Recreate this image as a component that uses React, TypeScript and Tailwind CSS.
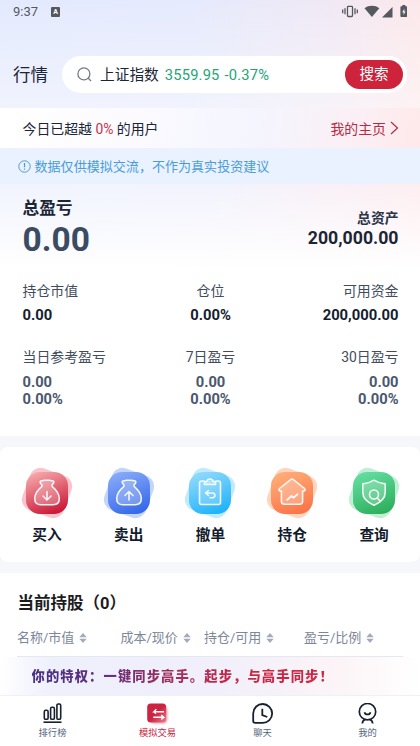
import type { ReactNode } from "react";

type ActionItem = {
  id: string;
  label: string;
  from: string;
  to: string;
  halo: string;
  icon: ReactNode;
};

const bag = (
  <path
    d="M19.300 16.200c-1.700-1.500-1.600-3.700.8-3.400 1 .1 1.300-.6 2.400-.6h5c1.100 0 1.400.7 2.400.6 2.400-.3 2.500 1.900.8 3.400-1 .9-1.100 1.700-.1 2.700 3.300 2.800 6.700 6.300 6.700 11.700 0 4.200-2.300 6.200-6 6.200H18.700c-3.700 0-6-2-6-6.200 0-5.400 3.400-8.900 6.700-11.700 1-1 .9-1.800-.1-2.700Z"
    fill="#fff"
    fillOpacity="0.25"
  />
);

const actions: ActionItem[] = [
  {
    id: "buy",
    label: "买入",
    from: "#f5a5a8",
    to: "#ca1735",
    halo: "#f58a9a",
    icon: (
      <>
        {bag}
        <path d="M25 23.500v8M21 28l4 4 4-4" />
      </>
    ),
  },
  {
    id: "sell",
    label: "卖出",
    from: "#87a9f8",
    to: "#3468ea",
    halo: "#86adfb",
    icon: (
      <>
        {bag}
        <path d="M25 32v-8M21 27.500l4-4 4 4" />
      </>
    ),
  },
  {
    id: "cancel",
    label: "撤单",
    from: "#8fd9fb",
    to: "#1eb2fb",
    halo: "#82d6fb",
    icon: (
      <>
        <path
          d="M19 13h-2.500a2 2 0 0 0-2 2v19.500a2 2 0 0 0 2 2h17a2 2 0 0 0 2-2V15a2 2 0 0 0-2-2H31"
          fill="#fff"
          fillOpacity="0.22"
        />
        <path d="M19.500 16.500v-3h2.200c.5-1.600 1.700-2.500 3.300-2.500s2.800.9 3.300 2.500h2.200v3Z" fill="#fff" fillOpacity="0.3" />
        <path d="M23.500 22.500 20.500 25l3 2.500M21 25h6.500a2.300 2.300 0 0 1 0 4.700H25" />
      </>
    ),
  },
  {
    id: "position",
    label: "持仓",
    from: "#ffad78",
    to: "#fa7448",
    halo: "#ffab80",
    icon: (
      <>
        <path
          d="M23.300 11.800 12.500 20.500c-1.200 1-.6 2.500.9 2.500h1v10.200c0 1.900 1.200 3 3 3h15.200c1.800 0 3-1.100 3-3V23h1c1.500 0 2.100-1.500.9-2.500L26.700 11.800c-1-.9-2.400-.9-3.400 0Z"
          fill="#fff"
          fillOpacity="0.25"
        />
        <path d="m20 32 4.500-4 2 1.700 4-3.500" strokeWidth="1.800" />
      </>
    ),
  },
  {
    id: "query",
    label: "查询",
    from: "#63dda0",
    to: "#2caf5b",
    halo: "#7fe0ab",
    icon: (
      <>
        <path
          d="M25 12.200c3.500 2.300 7.300 3.300 11.200 3.700v8.600c0 6.200-5.300 10.200-11.200 12.700-5.900-2.500-11.200-6.500-11.200-12.700v-8.600c3.900-.4 7.700-1.400 11.200-3.700Z"
          fill="#fff"
          fillOpacity="0.22"
        />
        <circle cx="25" cy="26.500" r="4.500" />
        <path d="m28.300 30 3 3.300" />
      </>
    ),
  },
];

const columns = [
  { label: "名称/市值", width: "w-[103.500px]" },
  { label: "成本/现价", width: "w-[83.500px]" },
  { label: "持仓/可用", width: "w-[100px]" },
  { label: "盈亏/比例", width: "w-[80px]" },
];

function StatusBar() {
  return (
    <div className="flex h-6 items-center justify-between px-[13px] text-[#55585f]">
      <div className="flex items-center gap-[13px]">
        <span className="text-[13px] leading-6">9:37</span>
        <span className="flex h-[10px] w-[9px] items-center justify-center rounded-[1px] bg-[#55585f] text-[7px] font-bold leading-none text-white">
          A
        </span>
      </div>
      <svg width="66" height="14" viewBox="0 0 66 14" fill="currentColor">
        <g fill="none" stroke="currentColor" strokeWidth="1.300">
          <rect x="6.500" y="1.300" width="5" height="10.200" rx="0.800" />
          <path d="M4 3.300v6M1.700 4.500v3.700M14 3.300v6M16.300 4.500v3.700" />
        </g>
        <path d="M23.500 3.300C27.300 0 34.500 0 38.300 3.300L30.900 12Z" />
        <path d="M51.500 2V12.500H41Z" />
        <path
          fillRule="evenodd"
          d="M60.300 1.200h1V0h3v1.200h1q.9 0 .9.900v9q0 .9-.9.900h-5q-.9 0-.9-.9v-9q0-.9.900-.9Zm3.100 2.600-2.300 3.400h1.400v2.700l2.200-3.500h-1.300Z"
        />
      </svg>
    </div>
  );
}

function Sorter() {
  return (
    <svg className="ml-[5px]" width="8" height="10" viewBox="0 0 8 10" fill="#a3abb8">
      <path d="M4 0 7.700 4.300H.3ZM.3 5.700h7.400L4 10Z" />
    </svg>
  );
}

function Actions() {
  return (
    <section className="flex h-[115px] rounded-[8px] bg-white pl-[6px] pt-[19px]">
      {actions.map(({ id, label, from, to, halo, icon }) => (
        <div key={id} className="flex w-[81.800px] flex-col items-center">
          <svg width="54" height="54" viewBox="-2 -2 54 54">
            <defs>
              <linearGradient id={id} x1="0.3" y1="0" x2="0.7" y2="1">
                <stop stopColor={from} />
                <stop offset="1" stopColor={to} />
              </linearGradient>
            </defs>
            <rect x="3" y="3" width="44" height="44" rx="11" fill={halo} opacity="0.5" transform="rotate(20 25 25)" />
            <rect x="4" y="4" width="42" height="42" rx="14" fill={`url(#${id})`} />
            <g fill="none" stroke="#fff" strokeOpacity="0.9" strokeWidth="1.600" strokeLinecap="round" strokeLinejoin="round">
              {icon}
            </g>
          </svg>
          <span className="mt-[4px] text-[14.700px] font-bold leading-[22px] text-[#131c2e]">{label}</span>
        </div>
      ))}
    </section>
  );
}

function TabBar() {
  return (
    <nav className="flex h-[51px] border-t border-[#f0f1f4] bg-white text-[9.300px] leading-[14px] text-[#56657d]">
      <div className="flex w-[105px] flex-col items-center pt-[7px]">
        <svg width="22" height="22" viewBox="0 0 22 22" fill="none" stroke="#17202f" strokeWidth="1.600">
          <rect x="2.300" y="7.300" width="3.800" height="9" rx="1.400" />
          <rect x="8.600" y="4.300" width="3.800" height="12" rx="1.400" />
          <rect x="14.900" y="1" width="3.800" height="15.300" rx="1.400" />
          <path d="M1.500 19.200h18" />
        </svg>
        <span className="mt-px">排行榜</span>
      </div>
      <div className="flex w-[105px] flex-col items-center pt-[7px] text-[#c9213b]">
        <svg width="22" height="22" viewBox="0 0 22 22">
          <defs>
            <filter id="soft">
              <feGaussianBlur stdDeviation="0.800" />
            </filter>
            <linearGradient id="trade" x1="0.500" y1="0.500" x2="1" y2="1">
              <stop stopColor="#cc2440" />
              <stop offset="1" stopColor="#e5808f" />
            </linearGradient>
          </defs>
          <rect x="3" y="3" width="17.500" height="17.500" rx="4.500" fill="#f0a3ae" filter="url(#soft)" />
          <rect x="0.200" y="0.500" width="19" height="19" rx="3.500" fill="url(#trade)" />
          <path d="M17 8.700H6.800l2.500-2.500M6.800 8.700l2.200 2M6.200 14.300h10.500l-2.500-2.400M16.700 14.300l-2.400 2.300" fill="none" stroke="#fff" strokeWidth="1.400" />
        </svg>
        <span className="mt-px">模拟交易</span>
      </div>
      <div className="flex w-[105px] flex-col items-center pt-[7px]">
        <svg width="22" height="22" viewBox="0 0 22 22" fill="none" stroke="#17202f" strokeWidth="1.800">
          <path d="M10.700 1a9.400 9.400 0 1 1 0 18.900H3.200q-2 0-2-2v-7.500A9.500 9.500 0 0 1 10.700 1Z" />
          <path d="M10.300 5.700v6.400l5 1.900" />
        </svg>
        <span className="mt-px">聊天</span>
      </div>
      <div className="flex w-[105px] flex-col items-center pt-[7px]">
        <svg width="22" height="22" viewBox="0 0 22 22" fill="none" stroke="#17202f" strokeWidth="1.700">
          <circle cx="10.500" cy="8.700" r="8.200" />
          <path d="M7.500 9.200c.7 3 5.300 3 6 0M5.300 20.500q.4-3.600 3.300-4.200M15.700 20.500q-.4-3.600-3.300-4.200" />
        </svg>
        <span className="mt-px">我的</span>
      </div>
    </nav>
  );
}

export default function App() {
  return (
    <main className="flex h-[746px] w-[420px] flex-col overflow-hidden bg-[#f6f7fa] font-['Roboto','Noto_Sans_CJK_SC',sans-serif] text-[#1b2536]">
      <header className="h-[108px] bg-[linear-gradient(90deg,#e4eafe_0%,#e5eafd_45%,#f0e9f5_78%,#fce8ea_100%)]">
        <div className="h-full bg-linear-to-b from-white/0 to-white/45">
          <StatusBar />
          <div className="flex items-center pl-[13px] pt-8">
            <h1 className="w-[49px] pt-px text-[17.500px] leading-[36px]">行情</h1>
            <div className="flex h-[37px] w-[345px] items-center rounded-full bg-white pl-[15px] pr-[4px]">
              <svg width="15" height="15" viewBox="0 0 15 15" fill="none" stroke="#747b86" strokeWidth="1.300">
                <circle cx="6.900" cy="6.900" r="6" />
                <path d="m11 11 3 3" />
              </svg>
              <span className="ml-2 pt-px text-[14.700px]">上证指数</span>
              <span className="ml-[6px] pt-px text-[14.700px] tracking-[0.200px] text-[#24a575]">3559.95</span>
              <span className="ml-[5px] pt-px text-[14.700px] tracking-[0.200px] text-[#24a575]">-0.37%</span>
              <button className="ml-auto h-[29px] w-[58px] rounded-full bg-[#cd233b] pt-px text-[14.500px] text-white">搜索</button>
            </div>
          </div>
        </div>
      </header>

      <div className="flex h-10 items-center justify-between bg-[linear-gradient(100deg,#ffffff_0%,#fbfbff_30%,#f4f5fe_60%,#fbeff4_85%,#ffe9ea_100%)] pl-[22.500px] pr-[21px] pt-[2px] text-[13.900px]">
        <p>
          今日已超越 <span className="text-[#c93249]">0%</span> 的用户
        </p>
        <a className="flex items-center text-[#b92a43]">
          我的主页
          <svg className="mb-[2px] ml-[4px]" width="9" height="14" viewBox="0 0 9 14" fill="none" stroke="currentColor" strokeWidth="1.200">
            <path d="m1 1 6.500 6L1 13" />
          </svg>
        </a>
      </div>

      <div className="flex h-9 items-center bg-[#e9f2fe] pl-[18px] text-[13.050px] text-[#4a9cd9]">
        <svg width="13" height="13" viewBox="0 0 13 13" fill="none" stroke="currentColor">
          <circle cx="6.500" cy="6.500" r="5.700" />
          <path d="M6.500 3v4.300M6.500 8.500v1.300" strokeWidth="1.200" />
        </svg>
        <span className="ml-[3.500px] pt-[2px]">数据仅供模拟交流，不作为真实投资建议</span>
      </div>

      <section className="h-[252px] shrink-0 bg-white">
        <div className="bg-[linear-gradient(90deg,#f1f4fe_0%,#f2f3fd_50%,#faf0f5_85%,#feeef0_100%)]">
          <div className="flex h-[84px] justify-between bg-linear-to-b from-white/0 to-white pl-[22.500px] pr-[21.500px]">
            <div className="pt-[13px]">
              <h2 className="text-[16.700px] font-bold leading-[24px]">总盈亏</h2>
              <p className="text-[33.500px] font-bold leading-[37px] text-[#3c4b64]">0.00</p>
            </div>
            <div className="pt-[24px] text-right">
              <h3 className="text-[13.800px] font-bold leading-[20px] text-[#2b3648]">总资产</h3>
              <p className="text-[17.700px] font-bold leading-[20px]">200,000.00</p>
            </div>
          </div>
        </div>
        <div className="grid grid-cols-3 pl-[22.500px] pr-[21.500px] pt-[12px] text-[13.900px] text-[#414c5d]">
          <span className="leading-[22px]">持仓市值</span>
          <span className="text-center leading-[22px]">仓位</span>
          <span className="text-right leading-[22px]">可用资金</span>
        </div>
        <div className="grid grid-cols-3 pl-[22.500px] pr-[21.500px] pt-[2px] text-[14.800px] font-bold leading-[22px] text-[#151e2f]">
          <span>0.00</span>
          <span className="text-center">0.00%</span>
          <span className="text-right">200,000.00</span>
        </div>
        <div className="grid grid-cols-3 pl-[22.500px] pr-[21.500px] pt-[20px] text-[13.900px] leading-[22px] text-[#414c5d]">
          <span>当日参考盈亏</span>
          <span className="text-center">7日盈亏</span>
          <span className="text-right">30日盈亏</span>
        </div>
        <div className="grid grid-cols-3 pl-[22.500px] pr-[21.500px] pt-[5.500px] text-[14.700px] font-bold leading-[17.800px] text-[#4a586e]">
          <span>0.00</span>
          <span className="text-center">0.00</span>
          <span className="text-right">0.00</span>
          <span>0.00%</span>
          <span className="text-center">0.00%</span>
          <span className="text-right">0.00%</span>
        </div>
      </section>

      <div className="py-[11px]">
        <Actions />
      </div>

      <section className="flex h-[122px] flex-col bg-white">
        <h2 className="pl-[17.500px] pt-[19px] text-[16.500px] font-bold leading-[24px] text-[#1c1c1e]">当前持股（0）</h2>
        <div className="mx-[17px] mt-[11px] flex h-[30px] border-b border-[#e4e8ef] text-[13px] leading-[22px] text-[#7c8798]">
          {columns.map((col) => (
            <div key={col.label} className={`flex h-[22px] shrink-0 items-center whitespace-nowrap ${col.width}`}>
              {col.label}
              <Sorter />
            </div>
          ))}
        </div>
        <div className="flex h-[38px] items-center bg-[linear-gradient(90deg,#ffffff_0%,#eef0fc_12%,#f0effb_50%,#fcf4f7_80%,#ffffff_100%)] pl-[31.500px] pt-[2px]">
          <p className="bg-[linear-gradient(90deg,#493083_0%,#65317d_25%,#a52f59_48%,#c92643_70%,#cd2943_100%)] bg-clip-text text-[13.300px] font-black leading-[20px] tracking-[1.100px] text-transparent">
            你的特权：一键同步高手。起步，与高手同步！
          </p>
        </div>
      </section>

      <TabBar />
    </main>
  );
}
